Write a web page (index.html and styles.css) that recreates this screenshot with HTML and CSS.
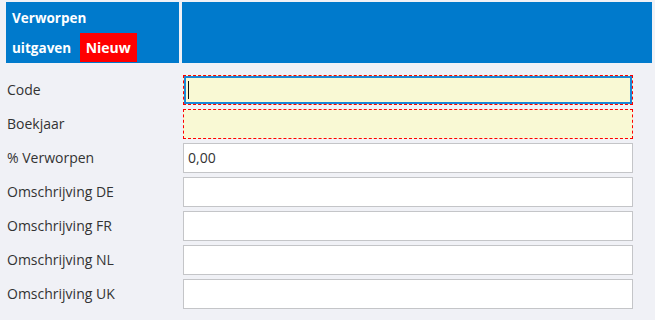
FILE: index.html
```html
<!DOCTYPE html>
<html>
<head>
<meta charset="utf-8">
<link rel="stylesheet" href="styles.css">
</head>
<body>
<div class="page">
  <div class="head">
    <div class="head-title">Verworpen<br>uitgaven <span class="badge">Nieuw</span></div>
    <div class="head-rest"></div>
  </div>
  <div class="form">
    <label class="lbl">Code</label>
    <div class="field req focus"><span class="caret"></span></div>
    <label class="lbl">Boekjaar</label>
    <div class="field req"></div>
    <label class="lbl">% Verworpen</label>
    <div class="field">0,00</div>
    <label class="lbl">Omschrijving DE</label>
    <div class="field"></div>
    <label class="lbl">Omschrijving FR</label>
    <div class="field"></div>
    <label class="lbl">Omschrijving NL</label>
    <div class="field"></div>
    <label class="lbl">Omschrijving UK</label>
    <div class="field"></div>
  </div>
</div>
</body>
</html>
```
FILE: styles.css
```css
html, body {
  margin: 0;
  padding: 0;
  background: #f0f1f6;
  font-family: "Open Sans", "Noto Sans", sans-serif;
}
.page {
  padding: 2px 3px 0 6px;
}
.head {
  display: flex;
  gap: 3px;
  height: 61px;
}
.head-title {
  width: 167px;
  background: #007acc;
  color: #fff;
  font-weight: 700;
  font-size: 13.5px;
  line-height: 30px;
  padding: 1px 0 0 6px;
}
.head-rest {
  flex: 1;
  background: #007acc;
}
.badge {
  display: inline-block;
  background: #ff0000;
  color: #fff;
  font-size: 14px;
  line-height: 29px;
  height: 29px;
  padding: 0 6px;
  margin-left: 5px;
  vertical-align: top;
}
.form {
  display: grid;
  grid-template-columns: 176px 450px;
  grid-auto-rows: 30px;
  row-gap: 4px;
  margin: 12px 0 0 1px;
}
.lbl {
  font-size: 14px;
  color: #333;
  line-height: 30px;
}
.field {
  position: relative;
  box-sizing: border-box;
  background: #fff;
  border: 1px solid #c4c5c8;
  font-size: 14px;
  color: #333;
  line-height: 28px;
  padding: 0 4px;
}
.field.req {
  background: #f9f9d4;
  border: 1px dashed #ff0000;
}
.field.focus {
  box-shadow: inset 0 0 0 2px #1a86d6;
}
.caret {
  position: absolute;
  left: 4px;
  top: 5px;
  width: 1px;
  height: 18px;
  background: #111;
}
```
